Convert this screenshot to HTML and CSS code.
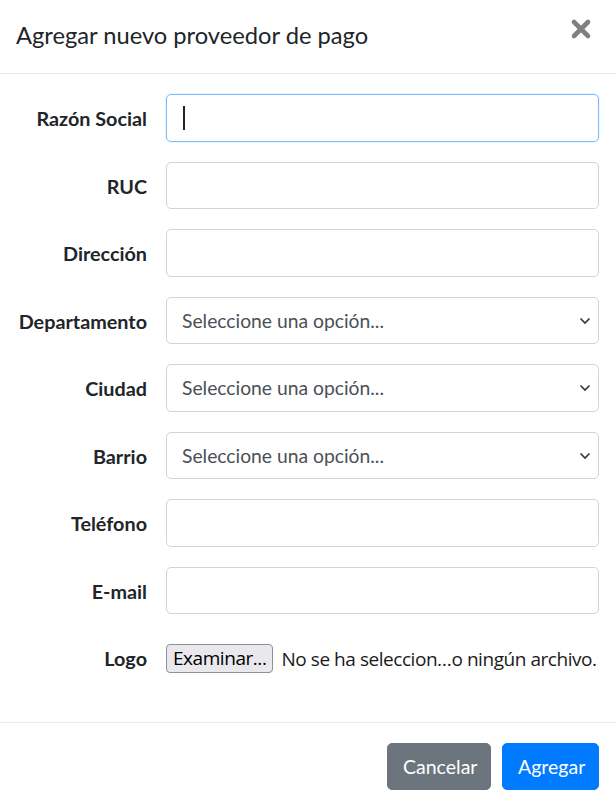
FILE: index.html
```html
<!DOCTYPE html>
<html lang="es">
<head>
<meta charset="utf-8">
<title>Agregar nuevo proveedor de pago</title>
<link rel="stylesheet" href="styles.css">
</head>
<body>
<div class="modal">
  <div class="modal-header">
    <h5 class="modal-title">Agregar nuevo proveedor de pago</h5>
    <button class="close" type="button" aria-label="Cerrar">
      <svg width="22" height="22" viewBox="0 0 22 22"><path d="M4 4L18 18M18 4L4 18" stroke="#808080" stroke-width="4.6" stroke-linecap="round" fill="none"/></svg>
    </button>
  </div>
  <div class="modal-body">
    <div class="row">
      <label class="lbl">Razón Social</label>
      <div class="field"><div class="control focus"><span class="caret"></span></div></div>
    </div>
    <div class="row">
      <label class="lbl">RUC</label>
      <div class="field"><div class="control"></div></div>
    </div>
    <div class="row">
      <label class="lbl">Dirección</label>
      <div class="field"><div class="control"></div></div>
    </div>
    <div class="row">
      <label class="lbl">Departamento</label>
      <div class="field"><div class="control select">Seleccione una opción...<svg class="chev" width="12" height="8" viewBox="0 0 12 8"><path d="M1.5 1.5L6 6L10.5 1.5" stroke="#343a40" stroke-width="1.7" fill="none"/></svg></div></div>
    </div>
    <div class="row">
      <label class="lbl">Ciudad</label>
      <div class="field"><div class="control select">Seleccione una opción...<svg class="chev" width="12" height="8" viewBox="0 0 12 8"><path d="M1.5 1.5L6 6L10.5 1.5" stroke="#343a40" stroke-width="1.7" fill="none"/></svg></div></div>
    </div>
    <div class="row">
      <label class="lbl">Barrio</label>
      <div class="field"><div class="control select">Seleccione una opción...<svg class="chev" width="12" height="8" viewBox="0 0 12 8"><path d="M1.5 1.5L6 6L10.5 1.5" stroke="#343a40" stroke-width="1.7" fill="none"/></svg></div></div>
    </div>
    <div class="row">
      <label class="lbl">Teléfono</label>
      <div class="field"><div class="control"></div></div>
    </div>
    <div class="row">
      <label class="lbl">E-mail</label>
      <div class="field"><div class="control"></div></div>
    </div>
    <div class="row">
      <label class="lbl">Logo</label>
      <div class="field file"><span class="file-btn">Examinar...</span><span class="file-name">No se ha seleccion…o ningún archivo.</span></div>
    </div>
  </div>
  <div class="modal-footer">
    <button class="btn btn-secondary" type="button">Cancelar</button>
    <button class="btn btn-primary" type="button">Agregar</button>
  </div>
</div>
</body>
</html>
```
FILE: styles.css
```css
* { box-sizing: border-box; }
html, body { margin: 0; padding: 0; background: #fff; }
body {
  font-family: Lato, "Liberation Sans", sans-serif;
  color: #212529;
  width: 616px;
}
.modal { width: 616px; background: #fff; }
.modal-header {
  height: 74px;
  border-bottom: 1px solid #e9ecef;
  display: flex;
  align-items: center;
  justify-content: space-between;
  padding: 0 24px 2px 16px;
}
.modal-title {
  margin: 0;
  font-size: 23.7px;
  font-weight: 400;
  color: #212529;
  line-height: 1.2;
}
.close {
  border: 0;
  background: transparent;
  padding: 0;
  margin-top: -14px;
  width: 22px;
  height: 22px;
  display: flex;
}
.modal-body {
  padding: 20px 17px 20px 16px;
}
.row {
  display: flex;
  align-items: center;
  min-height: 47.5px;
  margin-bottom: 20px;
}
.lbl {
  width: 131px;
  text-align: right;
  font-weight: 700;
  font-size: 19.8px;
  padding-top: 1px;
  color: #212529;
  white-space: nowrap;
}
.field {
  flex: 1;
  margin-left: 19px;
}
.control {
  position: relative;
  height: 47.5px;
  border: 1px solid #ced4da;
  border-radius: 5px;
  background: #fff;
  font-size: 19.3px;
  color: #495057;
  display: flex;
  align-items: center;
  padding: 0 15px;
}
.control.focus {
  border-color: #80bdff;
  box-shadow: 0 0 0 1px rgba(0,123,255,0.08);
}
.caret {
  display: block;
  width: 1.5px;
  height: 24px;
  background: #222;
  margin-left: 1px;
}
.chev {
  position: absolute;
  right: 7px;
  top: 19px;
}
.file {
  display: flex;
  align-items: center;
  padding-top: 2px;
}
.file-btn {
  display: inline-block;
  height: 29px;
  line-height: 27px;
  padding: 0 6px;
  border: 1px solid #8f8f9d;
  border-radius: 4px;
  background: #e9e9ed;
  color: #000;
  font-size: 19px;
  font-family: "Open Sans", sans-serif;
  letter-spacing: -0.45px;
}
.file-name {
  margin-left: 8px;
  font-size: 19px;
  color: #1b1b1b;
  font-family: "Open Sans", sans-serif;
  letter-spacing: -0.45px;
  white-space: nowrap;
}
.modal-footer {
  border-top: 1px solid #e9ecef;
  display: flex;
  justify-content: flex-end;
  gap: 11px;
  padding: 20px 17px 20px 16px;
}
.btn {
  height: 47.5px;
  border: 1px solid transparent;
  border-radius: 5px;
  font-family: Lato, "Liberation Sans", sans-serif;
  font-size: 19.5px;
  color: #fff;
  padding: 0 15px;
}
.btn-secondary { background: #6c757d; border-color: #6c757d; width: 104px; }
.btn-primary { background: #007bff; border-color: #007bff; width: 97px; }
```
